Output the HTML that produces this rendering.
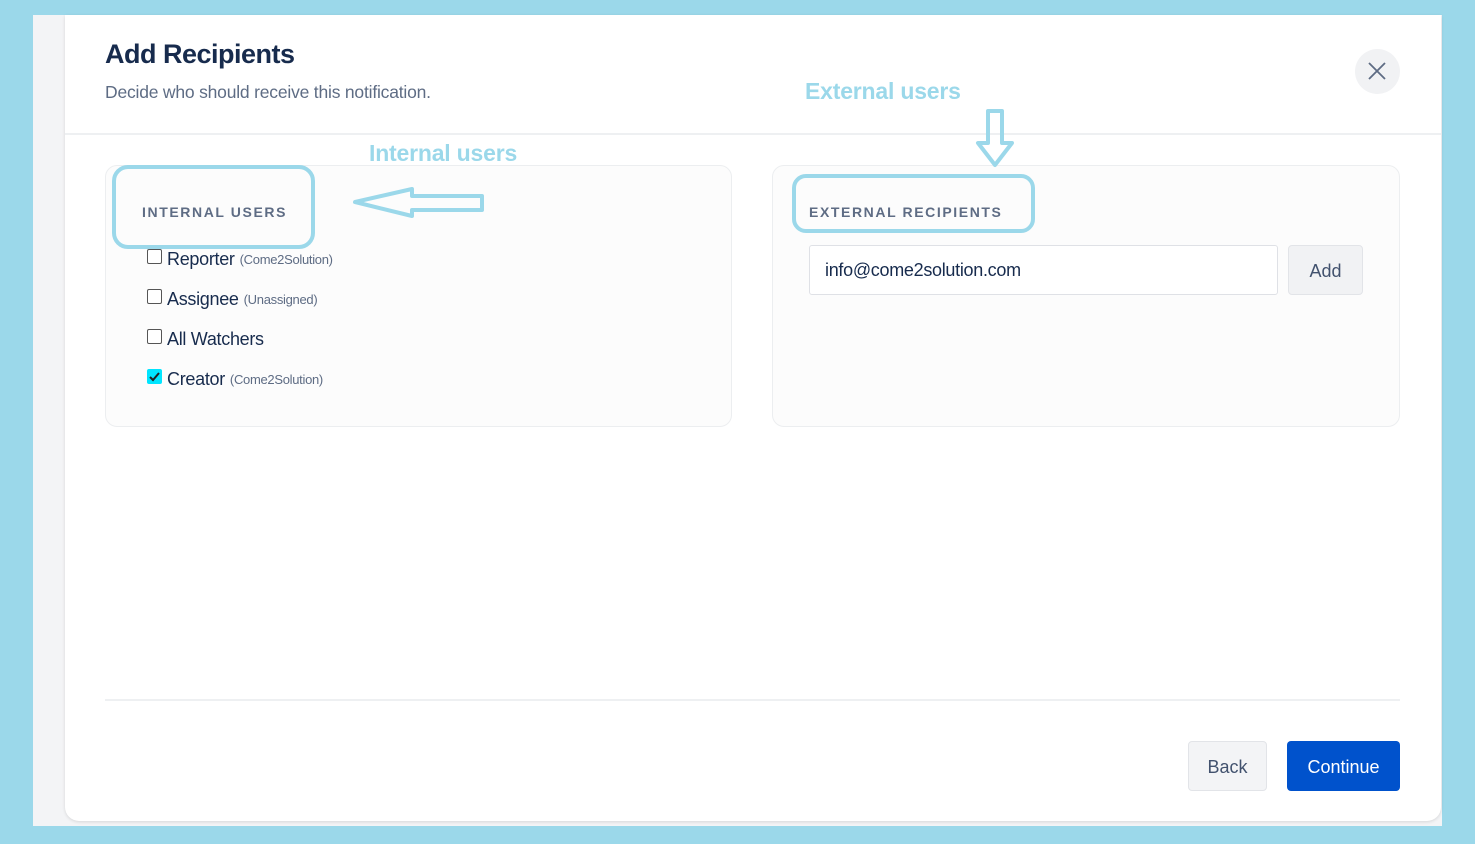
<!DOCTYPE html>
<html><head><meta charset="utf-8"><style>
*{box-sizing:border-box;margin:0;padding:0}
body{width:1475px;height:844px;background:#9bd8ea;position:relative;overflow:hidden;font-family:"Liberation Sans",sans-serif}
.abs{position:absolute}
.grey{left:33px;top:15px;width:1409px;height:811px;background:#f3f4f6}
.modal{left:65px;top:15px;width:1376px;height:806px;background:#fff;border-radius:0 0 14px 14px;box-shadow:0 1px 3px rgba(0,0,0,.12)}
h1{position:absolute;left:105px;top:39px;font-size:27px;font-weight:bold;color:#172b4d;letter-spacing:-0.5px}
.sub{left:105px;top:82px;font-size:17.5px;color:#5e6c84;letter-spacing:-0.2px}
.hr{background:#eef0f2;height:2px}
.card{background:#fcfcfc;border:1px solid #eceef0;border-radius:12px}
.lab{font-size:14px;font-weight:bold;letter-spacing:1.6px;color:#5e6c84}
.ann{color:#9bd8ea;font-weight:bold;font-size:23px;letter-spacing:-0.2px}
.ring{border:4px solid #9bd8ea;border-radius:16px}
.item{left:147px;font-size:18px;color:#172b4d;display:flex;align-items:center;letter-spacing:-0.3px}
.cb{width:15px;height:15px;border:1px solid #555;border-radius:2px;margin-right:5px;background:#fff;margin-top:-6px}
.item small{font-size:13px;color:#5e6c84;margin-left:5px}
.btn{border-radius:4px;font-size:18px;display:flex;align-items:center;justify-content:center}
</style></head><body>
<div class="abs grey"></div>
<div class="abs modal"></div>
<h1>Add Recipients</h1>
<div class="abs sub">Decide who should receive this notification.</div>
<div class="abs" style="left:1355px;top:49px;width:45px;height:45px;border-radius:50%;background:#f1f2f4"></div>
<svg class="abs" style="left:1367px;top:61px" width="20" height="20"><path d="M2 2L18 18M18 2L2 18" stroke="#5e6c84" stroke-width="1.8"/></svg>
<div class="abs hr" style="left:65px;top:133px;width:1376px"></div>

<div class="abs card" style="left:105px;top:165px;width:627px;height:262px"></div>
<div class="abs card" style="left:772px;top:165px;width:628px;height:262px"></div>

<div class="abs ann" style="left:369px;top:140px">Internal users</div>
<div class="abs ann" style="left:805px;top:78px">External users</div>
<div class="abs ring" style="left:112px;top:165px;width:203px;height:84px"></div>
<div class="abs lab" style="left:142px;top:204px">INTERNAL USERS</div>
<svg class="abs" style="left:350px;top:184px" width="136" height="36"><path d="M5 18L62 5V12H132V26H62V32Z" fill="none" stroke="#9bd8ea" stroke-width="4" stroke-linejoin="round"/></svg>
<svg class="abs" style="left:974px;top:108px" width="42" height="62"><path d="M14 3H28V35H38L21 57L4 35H14Z" fill="none" stroke="#9bd8ea" stroke-width="4" stroke-linejoin="round"/></svg>
<div class="abs ring" style="left:792px;top:174px;width:243px;height:59px;border-radius:14px"></div>
<div class="abs lab" style="left:809px;top:204px">EXTERNAL RECIPIENTS</div>

<div class="abs item" style="top:249px"><span class="cb"></span>Reporter<small>(Come2Solution)</small></div>
<div class="abs item" style="top:289px"><span class="cb"></span>Assignee<small>(Unassigned)</small></div>
<div class="abs item" style="top:329px"><span class="cb"></span>All Watchers</div>
<div class="abs item" style="top:369px"><span class="cb" style="background:#00e5ff;border-color:#00e5ff;position:relative"><svg style="position:absolute;left:0;top:0" width="13" height="13"><path d="M2 7L5 10L11 3" fill="none" stroke="#222" stroke-width="2"/></svg></span>Creator<small>(Come2Solution)</small></div>

<div class="abs" style="left:809px;top:245px;width:469px;height:50px;border:1px solid #dfe1e6;border-radius:3px;background:#fff;font-size:18px;color:#172b4d;padding:14px 15px;letter-spacing:-0.3px">info@come2solution.com</div>
<div class="abs btn" style="left:1288px;top:245px;width:75px;height:50px;background:#f1f2f4;border:1px solid #e2e4e8;color:#42526e;padding-top:3px">Add</div>

<div class="abs hr" style="left:105px;top:699px;width:1295px"></div>
<div class="abs btn" style="left:1188px;top:741px;width:79px;height:50px;background:#f3f4f6;border:1px solid #e2e4e8;color:#42526e;padding-top:2px">Back</div>
<div class="abs btn" style="left:1287px;top:741px;width:113px;height:50px;background:#0052cc;color:#fff;padding-top:2px">Continue</div>
</body></html>
